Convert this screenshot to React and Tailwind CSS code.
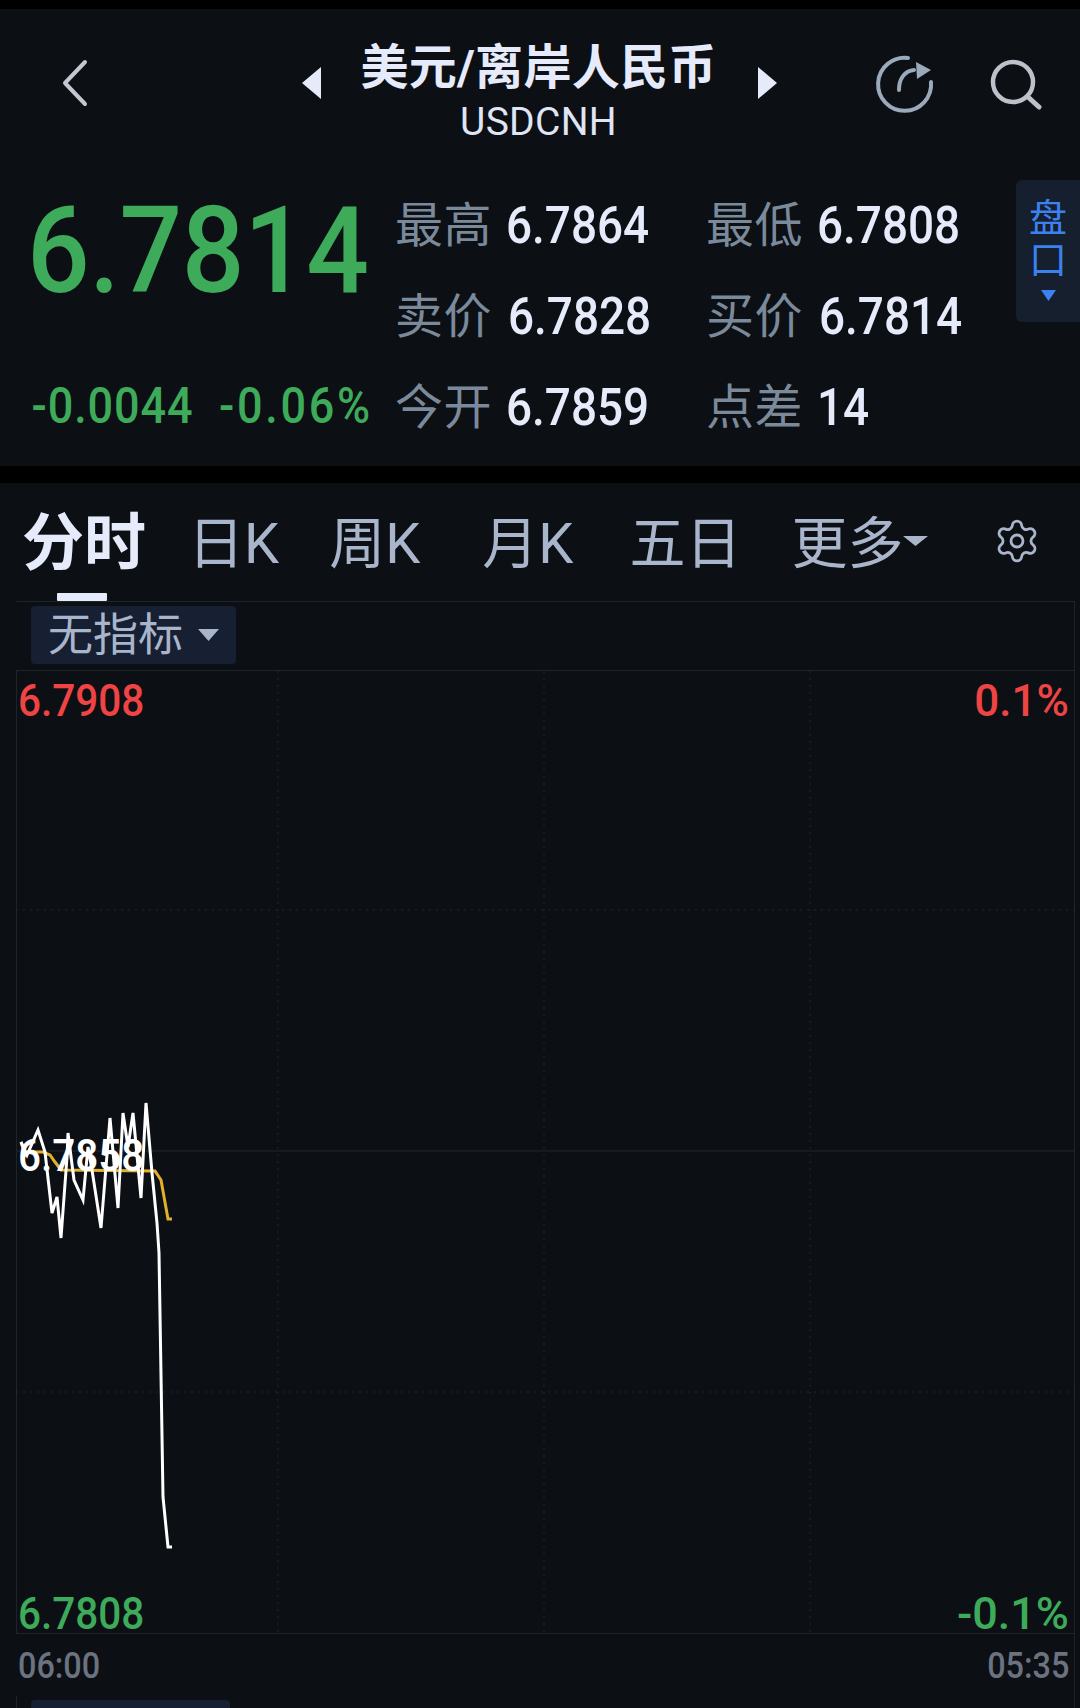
import React from "react";
import { Settings } from "lucide-react";

const white = [[21,1142],[27,1155],[38,1130],[45,1152],[52,1213],[57,1197],[61,1238],[67,1157],[68,1133],[74,1180],[83,1200],[88,1147],[92,1170],[101,1228],[110,1118],[118,1208],[123,1113],[128,1147],[133,1113],[141,1198],[146,1103],[152,1173],[157,1223],[159,1253],[163,1497],[168,1547],[172,1547]];
const yellow = [[21,1142],[24,1152],[43,1152],[50,1155],[55,1162],[61,1170],[155,1171],[161,1180],[168,1219],[172,1219]];
const pts = (a) => a.map((p) => p.join(",")).join(" ");

function Num({ children, className = "" }) {
  return <span className={`inline-block origin-left scale-x-[0.9] whitespace-nowrap font-medium ${className}`}>{children}</span>;
}

function Stat({ label, value, gap }) {
  return (
    <div className="flex h-[91px] items-center">
      <span className="w-[96px] shrink-0 whitespace-nowrap text-[48px] leading-none tracking-[0.5px] text-[#7a8a9b]">{label}</span>
      <span className={`${gap} text-[51px] leading-none text-[#e6ebfb]`}>
        <Num>{value}</Num>
      </span>
    </div>
  );
}

function Caret({ w, h, color }) {
  return (
    <svg width={w} height={h} viewBox="0 0 10 6" preserveAspectRatio="none" className="block shrink-0">
      <path d="M0 0H10L5 6Z" fill={color} />
    </svg>
  );
}

function Tab({ children, className = "" }) {
  return <span className={`text-[56px] leading-none text-[#a8b5ca] ${className}`}>{children}</span>;
}

export default function App() {
  return (
    <div className="flex h-[1708px] w-[1080px] flex-col overflow-hidden bg-black pt-[9px] font-['Roboto','Noto_Sans_CJK_SC',sans-serif]">
      <section className="h-[457px] shrink-0 bg-[#0c0f14]">
        <header className="flex h-[171px] items-start">
          <svg width="26" height="48" viewBox="0 0 26 48" className="ml-[62px] mt-[50px] shrink-0">
            <path d="M23 3L3 24L23 45" fill="none" stroke="#c3c7d1" strokeWidth="4" strokeLinecap="round" strokeLinejoin="round" />
          </svg>
          <svg width="20" height="32" viewBox="0 0 20 32" className="ml-[214px] mt-[58px] shrink-0">
            <path d="M19 0V32L0 16Z" fill="#e6ebfb" />
          </svg>
          <div className="ml-[39px] flex w-[355px] shrink-0 flex-col items-center">
            <div className="mt-[32px] whitespace-nowrap text-[48px] font-bold leading-[54px] tracking-[0.3px] text-[#e6ebfb]">美元/离岸人民币</div>
            <div className="mt-[5px] text-[39px] leading-[44px] tracking-[0.3px] text-[#dfe5f5]">USDCNH</div>
          </div>
          <svg width="20" height="32" viewBox="0 0 20 32" className="ml-[41px] mt-[58px] shrink-0">
            <path d="M1 0V32L20 16Z" fill="#e6ebfb" />
          </svg>
          <svg width="60" height="60" viewBox="0 0 60 60" className="ml-[98px] mt-[45px] shrink-0">
            <path d="M33 4A26.5 26.5 0 1 0 56 28" fill="none" stroke="#9aaabb" strokeWidth="4" strokeLinecap="round" />
            <path d="M24 36C24 24 30 17 39 16" fill="none" stroke="#9aaabb" strokeWidth="4" strokeLinecap="round" />
            <path d="M41 8L56 16L42 25Z" fill="#9aaabb" />
          </svg>
          <svg width="52" height="52" viewBox="0 0 52 52" className="ml-[55px] mt-[50px] shrink-0">
            <circle cx="23" cy="23" r="20" fill="none" stroke="#bcc1ca" strokeWidth="4.5" />
            <path d="M38 38L49 48" stroke="#bcc1ca" strokeWidth="5" strokeLinecap="round" />
          </svg>
        </header>
        <div className="flex items-start">
          <div className="w-[395px] shrink-0 pl-[27px]">
            <div className="flex h-[142px] items-center text-[120px] font-medium leading-none tracking-[-0.5px] text-[#3dab5a]">
              <span className="inline-block origin-left scale-x-[0.92] whitespace-nowrap">6.7814</span>
            </div>
            <div className="mt-[38px] flex h-[91px] items-center text-[50px] leading-none text-[#3dab5a]">
              <Num className="w-[192px] pl-[5px] tracking-[1px]">-0.0044</Num>
              <Num className="tracking-[3px]">-0.06%</Num>
            </div>
          </div>
          <div className="grid w-[621px] shrink-0 grid-cols-[311px_1fr]">
            <Stat label="最高" value="6.7864" gap="ml-[15px]" />
            <Stat label="最低" value="6.7808" gap="ml-[15px]" />
            <Stat label="卖价" value="6.7828" gap="ml-[17px]" />
            <Stat label="买价" value="6.7814" gap="ml-[17px]" />
            <Stat label="今开" value="6.7859" gap="ml-[15px]" />
            <Stat label="点差" value="14" gap="ml-[15px]" />
          </div>
          <div className="flex h-[142px] w-[64px] shrink-0 flex-col items-center rounded-l-[6px] bg-[#161f2e] pt-[17px] text-[38px] leading-[42px] text-[#3b82f0]">
            <span>盘</span>
            <span>口</span>
            <span className="mt-[9px]"><Caret w={15} h={11} color="#3b82f0" /></span>
          </div>
        </div>
      </section>

      <section className="mt-[17px] flex flex-1 flex-col bg-[#0c0f14]">
        <div className="relative flex h-[118px] shrink-0 items-center pt-[4px]">
          <span className="ml-[22px] text-[62px] font-bold leading-none text-[#e6ebfb]">分时</span>
          <Tab className="ml-[42px]">日K</Tab>
          <Tab className="ml-[50px]">周K</Tab>
          <Tab className="ml-[62px]">月K</Tab>
          <Tab className="ml-[56px]">五日</Tab>
          <Tab className="ml-[50px]">更多</Tab>
          <span className="mt-[-6px]"><Caret w={25} h={10} color="#a8b5ca" /></span>
          <Settings size={48} strokeWidth={1.4} color="#a8b5ca" className="ml-[65px] mt-[-6px]" />
          <span className="absolute bottom-0 left-[57px] h-[8px] w-[50px] rounded-[1px] bg-[#e6ebfb]" />
        </div>
        <div className="ml-[16px] flex w-[1059px] flex-1 flex-col border-r border-t border-[#1e242c]">
          <div className="h-[68px] shrink-0 pl-[15px] pt-[4px]">
            <div className="flex h-[58px] w-[205px] items-center rounded-[4px] bg-[#172033] pl-[17px]">
              <span className="text-[45px] leading-none text-[#a8b5ca]">无指标</span>
              <span className="ml-[15px]"><Caret w={21} h={12} color="#a8b5ca" /></span>
            </div>
          </div>
          <div className="relative h-[964px] shrink-0 border-y border-l border-[#1e242c]">
            <svg width="1058" height="962" viewBox="17 671 1058 962" className="absolute inset-0">
              <g stroke="#1a1f27" strokeWidth="1.5" fill="none">
                <path d="M16 910H1074M16 1392H1074" strokeDasharray="2 5" />
                <path d="M278 671V1633M544 671V1633M810 671V1633" strokeDasharray="2 5" />
                <path d="M16 1151H1074" />
              </g>
              <polyline points={pts(yellow)} fill="none" stroke="#e3b02e" strokeWidth="3" />
              <polyline points={pts(white)} fill="none" stroke="#ffffff" strokeWidth="3" />
            </svg>
            <div className="absolute left-[1px] top-[8px] text-[45px] leading-[44px] text-[#ee4444]"><Num>6.7908</Num></div>
            <div className="absolute right-[5px] top-[8px] text-[44px] font-medium leading-[44px] text-[#ee4444]">0.1%</div>
            <div className="absolute left-[1px] top-[463px] text-[45px] leading-[44px] text-white"><Num>6.7858</Num></div>
            <div className="absolute bottom-[-3px] left-[1px] text-[45px] leading-[44px] text-[#3dab5a]"><Num>6.7808</Num></div>
            <div className="absolute bottom-[-3px] right-[5px] text-[45px] font-medium leading-[44px] text-[#3dab5a]">-0.1%</div>
          </div>
          <div className="flex h-[62px] shrink-0 items-start justify-between pl-[2px] pr-[5px] pt-[14px] text-[36px] font-medium leading-[36px] text-[#6b7280]">
            <Num>06:00</Num>
            <span className="inline-block origin-right scale-x-[0.9]">05:35</span>
          </div>
          <div className="flex flex-1 items-end border-l border-[#1e242c] pl-[14px]">
            <div className="h-[8px] w-[199px] rounded-t-[4px] bg-[#172033]" />
          </div>
        </div>
      </section>
    </div>
  );
}
